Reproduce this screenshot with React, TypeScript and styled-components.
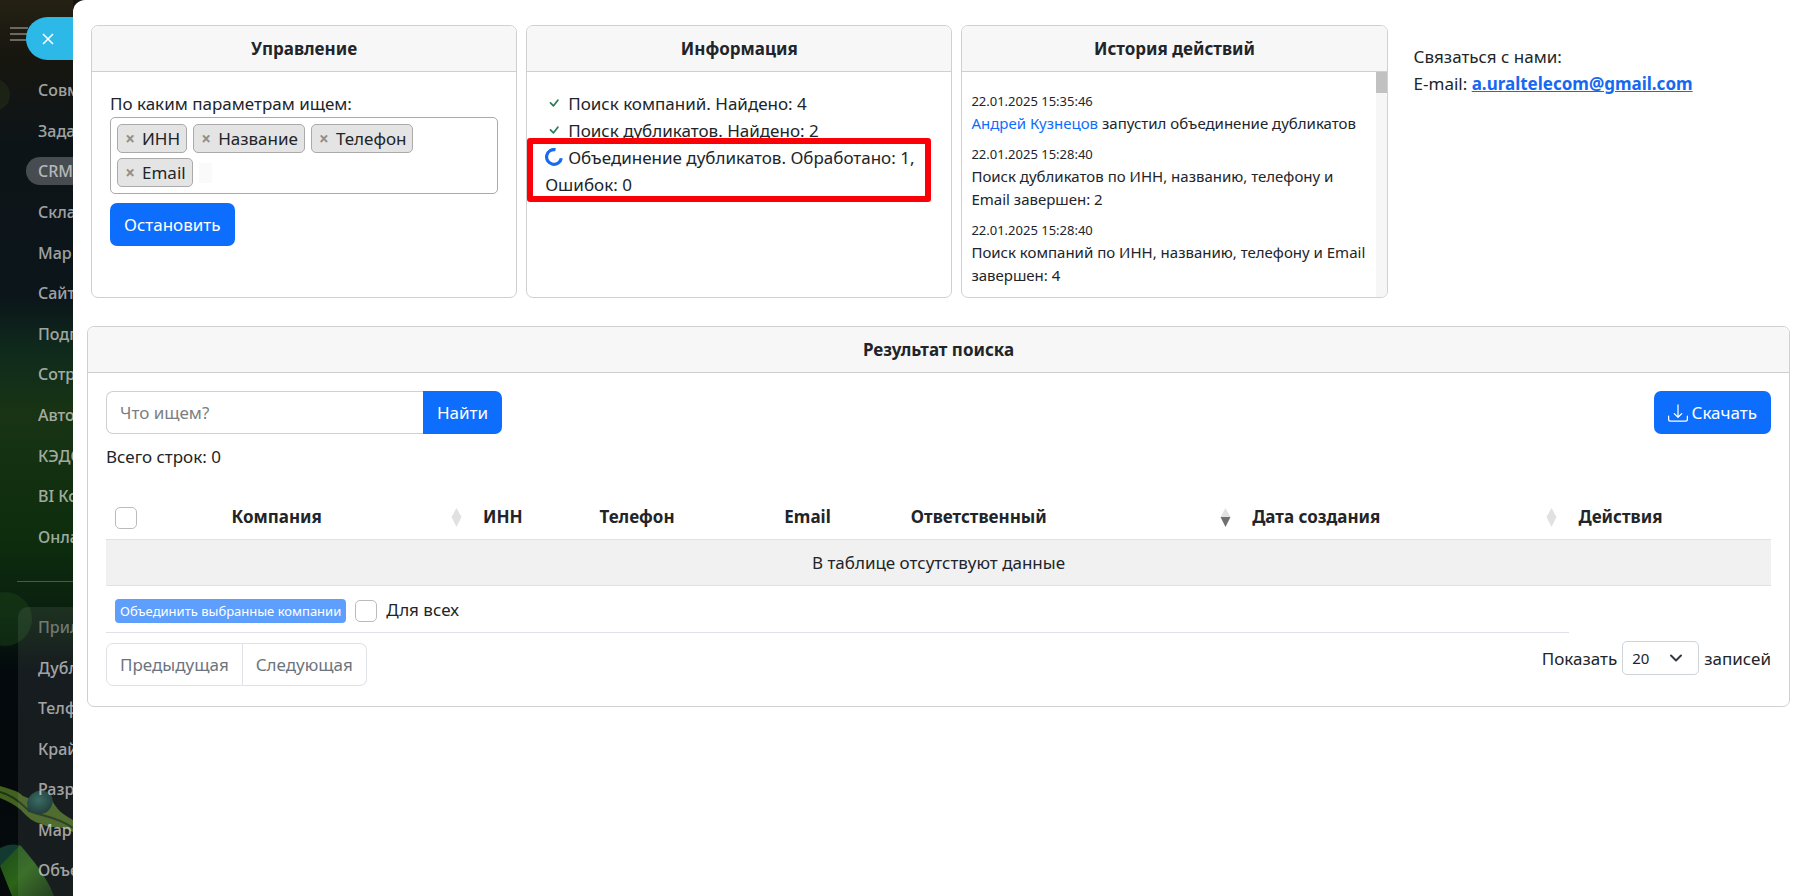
import React from "react";
import styled, { createGlobalStyle } from "styled-components";
import { BsCheck, BsDownload } from "react-icons/bs";

const GlobalStyle = createGlobalStyle`
  *, *::before, *::after { box-sizing: border-box; }
  body {
    margin: 0;
    background: #fff;
    color: #212529;
    font-family: "Noto Sans", "Open Sans", sans-serif;
    font-size: 17px;
    line-height: 27px;
  }
  button, input, select { font: inherit; color: inherit; }
  ul, h2, p { margin: 0; padding: 0; list-style: none; }
`;

const Page = styled.div`
  display: flex;
  min-height: 100vh;
  background: #14140f;
`;

const Sidebar = styled.aside`
  position: relative;
  width: 73px;
  flex: none;
  overflow: hidden;
`;

const Scenery = styled.svg`
  position: absolute;
  inset: 0;
  width: 100%;
  height: 100%;
`;

const SidebarInner = styled.div`
  position: relative;
  display: flex;
  flex-direction: column;
  min-height: 100%;
  padding-top: 17px;
`;

const SidebarTop = styled.div`
  display: flex;
  align-items: center;
  padding-left: 10px;
  height: 43px;
`;

const Burger = styled.button`
  display: flex;
  flex: none;
  width: 18px;
  margin-right: -2px;
  padding: 0 0 9px;
  border: 0;
  background: none;
`;

const ClosePill = styled.button`
  position: relative;
  flex: 1;
  height: 43px;
  padding: 0 0 0 16px;
  border: 0;
  border-radius: 22px 0 0 22px;
  background: #2db9e8;
  color: #fff;
  display: flex;
  align-items: center;
`;

const Nav = styled.nav`
  display: flex;
  flex: 1;
  flex-direction: column;
`;

const Menu = styled.ul`
  display: flex;
  flex-direction: column;
  justify-content: space-between;
  height: 475px;
  margin-top: 16px;
`;

const MenuLink = styled.a<{ $active?: boolean; $dim?: boolean }>`
  display: block;
  height: 28px;
  line-height: 28px;
  margin-left: 26px;
  padding-left: 12px;
  border-radius: 14px 0 0 14px;
  background: ${(p) => (p.$active ? "rgba(255,255,255,.24)" : "none")};
  color: ${(p) => (p.$dim ? "rgba(255,255,255,.38)" : "rgba(255,255,255,.62)")};
  font-size: 16px;
  font-weight: 500;
  text-decoration: none;
  white-space: nowrap;
`;

const Divider = styled.hr`
  width: 56px;
  height: 1px;
  margin: 30px 0 25px 17px;
  border: 0;
  background: rgba(255, 255, 255, 0.25);
`;

const MenuGroup = styled.div`
  flex: 1;
  margin-left: 18px;
  padding-top: 6px;
  border-radius: 10px 0 0 0;
  background: rgba(255, 255, 255, 0.08);
  & ul { height: 271px; margin: 0 0 0 -18px; }
`;

const Panel = styled.main`
  flex: 1;
  min-width: 0;
  padding: 25px 10px 25px 14px;
  border-radius: 12px 0 0 0;
  background: #fff;
`;

const TopRow = styled.div`
  display: grid;
  grid-template-columns: repeat(3, 13fr) 12fr;
  gap: 9px;
  margin: 0 0 28px 4px;
`;

const Card = styled.section`
  display: flex;
  flex-direction: column;
  min-width: 0;
  border: 1px solid #d0d0d0;
  border-radius: 7px;
  overflow: hidden;
  background: #fff;
`;

const TopCard = styled(Card)`
  height: 273px;
`;

const CardTitle = styled.h2`
  flex: none;
  padding: 9px 18px;
  border-bottom: 1px solid #cfcfcf;
  background: #f7f7f7;
  font-size: 17px;
  line-height: 27px;
  font-weight: 700;
  text-align: center;
`;

const CardBody = styled.div`
  padding: 18px;
`;

const FieldLabel = styled.label`
  display: block;
`;

const TagBox = styled.div`
  display: flex;
  flex-wrap: wrap;
  align-items: center;
  gap: 5px 6px;
  padding: 6px 18px 6px 6px;
  margin-bottom: 9px;
  border: 1px solid #aaa;
  border-radius: 5px;
`;

const Tag = styled.span`
  display: flex;
  align-items: center;
  height: 29px;
  padding-right: 6px;
  border: 1px solid #aaa;
  border-radius: 5px;
  background: #e4e4e4;
`;

const TagRemove = styled.button`
  width: 24px;
  padding: 0;
  border: 0;
  background: none;
  color: #8f8f8f;
  font-weight: 700;
  line-height: 27px;
`;

const TagSearch = styled.input`
  width: 13px;
  height: 20px;
  border: 0;
  background: #fafafa;
`;

const Button = styled.button`
  display: inline-flex;
  align-items: center;
  gap: 4px;
  height: 43px;
  padding: 0 14px;
  border: 0;
  border-radius: 7px;
  background: #0d6efd;
  color: #fff;
`;

const Step = styled.li`
  position: relative;
`;

const StepIcon = styled.span`
  display: inline-flex;
  width: 18px;
  height: 18px;
  margin-right: 5px;
  vertical-align: -2px;
  color: #2f7d5b;
`;

const Highlight = styled.div`
  position: absolute;
  z-index: 1;
  top: -6px;
  bottom: -4px;
  left: -18px;
  right: 2px;
  border: 6px solid #fb0007;
  border-radius: 3px;
  pointer-events: none;
`;

const HistoryArea = styled.div`
  display: flex;
  flex: 1;
  min-height: 0;
`;

const HistoryList = styled.ul`
  flex: 1;
  min-width: 0;
  padding: 18px 9px 0;
  overflow: hidden;
  font-size: 15px;
  line-height: 23px;
`;

const HistoryItem = styled.li`
  margin-bottom: 8px;
  & time {
    display: block;
    font-size: 13px;
    line-height: 22px;
  }
  & a { color: #0d6efd; text-decoration: none; }
`;

const ScrollTrack = styled.div`
  width: 11px;
  background: #f6f6f6;
`;

const ScrollThumb = styled.div`
  height: 21px;
  background: #c1c1c1;
`;

const Contact = styled.address`
  padding: 18px 17px;
  font-style: normal;
  & a { color: #1668f0; font-weight: 700; }
`;

const Toolbar = styled.div`
  display: flex;
  justify-content: space-between;
`;

const SearchForm = styled.form`
  display: flex;
  width: 396px;
  & button { border-radius: 0 7px 7px 0; }
`;

const SearchInput = styled.input`
  flex: 1;
  min-width: 0;
  height: 43px;
  padding: 0 13px;
  border: 1px solid #d0d0d0;
  border-right: 0;
  border-radius: 7px 0 0 7px;
  &::placeholder { color: #7a7f84; opacity: 1; }
`;

const RowCount = styled.p`
  margin: 9px 0 24px;
`;

const Table = styled.table`
  width: 100%;
  table-layout: fixed;
  border-collapse: separate;
  border-spacing: 0;
  & th, & td {
    height: 46px;
    padding: 0 9px;
    border-bottom: 1px solid #dee2e6;
    text-align: left;
    white-space: nowrap;
  }
  & tbody td { background: #f1f1f1; text-align: center; }
  & tfoot td { height: 47px; }
  & tfoot td:last-child { border-bottom: 0; }
`;

const HeadCell = styled.div`
  display: flex;
  align-items: center;
  justify-content: space-between;
  padding-right: 3px;
`;

const CheckBox = styled.input`
  appearance: none;
  display: block;
  flex: none;
  width: 22px;
  height: 22px;
  margin: 3px 0 0;
  border: 1px solid #b9bcbf;
  border-radius: 5px;
  background: #fff;
`;

const FootTools = styled.div`
  display: flex;
  align-items: center;
  gap: 9px;
`;

const MergeButton = styled.button`
  height: 24px;
  margin-top: 3px;
  padding: 0 5px;
  border: 0;
  border-radius: 4px;
  background: #5e9ffe;
  color: #fff;
  font-size: 13px;
  line-height: 24px;
`;

const TableFooter = styled.div`
  display: flex;
  justify-content: space-between;
  align-items: flex-start;
  padding-top: 8px;
`;

const Pager = styled.div`
  display: flex;
  margin: 2px 0;
`;

const PageButton = styled.button`
  height: 43px;
  padding: 0 13px;
  border: 1px solid #dee2e6;
  background: #fff;
  color: #6c757d;
  &:first-child { border-radius: 7px 0 0 7px; }
  &:last-child { border-radius: 0 7px 7px 0; border-left: 0; }
`;

const PageSize = styled.label`
  display: flex;
  align-items: center;
  gap: 5px;
`;

const SelectWrap = styled.span`
  position: relative;
  display: flex;
  & svg {
    position: absolute;
    right: 16px;
    top: 10px;
    pointer-events: none;
  }
`;

const Select = styled.select`
  appearance: none;
  width: 77px;
  height: 34px;
  padding: 0 9px;
  border: 1px solid #ced4da;
  border-radius: 5px;
  background: #fff;
  font-size: 15px;
`;

function SortIcon({ desc }: { desc?: boolean }) {
  return (
    <svg width="11" height="20" viewBox="0 0 11 20" aria-hidden="true">
      <path d="M0.5 10 5.5 1 10.5 10z" fill="#e1e1e2" />
      <path d="M0.5 10h10L5.5 20z" fill={desc ? "#6f7072" : "#e1e1e2"} />
    </svg>
  );
}

function Spinner() {
  return (
    <svg width="18" height="18" viewBox="0 0 18 18" aria-hidden="true">
      <path d="M10.5 1.7A7.4 7.4 0 1 0 16.3 10.2" fill="none" stroke="#1a69ee" strokeWidth="3.2" />
    </svg>
  );
}

const mainMenu = ["Совм", "Зада", "CRM", "Скла", "Мар", "Сайт", "Подп", "Сотр", "Авто", "КЭДО", "BI Ко", "Онла"];
const appMenu = ["Прил", "Дубл", "Телф", "Край", "Разр", "Мар", "Объе"];
const tags = ["ИНН", "Название", "Телефон", "Email"];

const columns: { title: string; width: string; sort?: "none" | "desc" }[] = [
  { title: "Компания", width: "15.1%", sort: "none" },
  { title: "ИНН", width: "7%" },
  { title: "Телефон", width: "11.1%" },
  { title: "Email", width: "7.6%" },
  { title: "Ответственный", width: "20.5%", sort: "desc" },
  { title: "Дата создания", width: "19.6%", sort: "none" },
  { title: "Действия", width: "12.1%" },
];

const history = [
  { time: "22.01.2025 15:35:46", who: "Андрей Кузнецов", text: " запустил объединение дубликатов" },
  { time: "22.01.2025 15:28:40", text: "Поиск дубликатов по ИНН, названию, телефону и Email завершен: 2" },
  { time: "22.01.2025 15:28:40", text: "Поиск компаний по ИНН, названию, телефону и Email завершен: 4" },
];

function Backdrop() {
  return (
    <Scenery viewBox="0 0 73 896" preserveAspectRatio="none" aria-hidden="true">
      <defs>
        <linearGradient id="sky" x1="0" y1="0" x2="0" y2="1">
          <stop offset="0" stopColor="#252114" />
          <stop offset=".06" stopColor="#17160f" />
          <stop offset=".16" stopColor="#0d1418" />
          <stop offset=".33" stopColor="#0b151a" />
          <stop offset=".39" stopColor="#0f2a1c" />
          <stop offset=".46" stopColor="#183414" />
          <stop offset=".6" stopColor="#0d2d0d" />
          <stop offset=".68" stopColor="#0a200f" />
          <stop offset=".75" stopColor="#03090c" />
          <stop offset="1" stopColor="#050a0b" />
        </linearGradient>
        <linearGradient id="leaf" x1="0" y1="0" x2="1" y2="1">
          <stop offset="0" stopColor="#1b4a1c" />
          <stop offset=".5" stopColor="#2c6418" />
          <stop offset="1" stopColor="#12300f" />
        </linearGradient>
        <radialGradient id="bud" cx=".45" cy=".4" r=".6">
          <stop offset="0" stopColor="#2a6058" />
          <stop offset="1" stopColor="#102f2c" />
        </radialGradient>
      </defs>
      <rect width="73" height="896" fill="url(#sky)" />
      <circle cx="-6" cy="95" r="16" fill="#1d2217" />
      <circle cx="5" cy="619" r="27" fill="#1d4b1c" opacity=".4" />
      <path d="M0 786c9 3 17 4 23 10l10 4 18-2c4 8 7 14 22 22v12c-14-8-22-2-31-8-8-1-16-8-21-14-6-5-13-9-21-12z" fill="#42601f" />
      <path d="M0 792c12 3 20 10 27 17s26 5 46 19" fill="none" stroke="#1d3415" strokeWidth="2" />
      <path d="M27 803c2-10 12-15 20-11 8 3 7 14 1 19-7 6-14 1-20 1z" fill="url(#bud)" />
      <path d="M0 848c10-5 18-4 22-1l-4 12L0 866z" fill="#123a31" />
      <path d="M0 866l20-21c12 14 26 30 34 51H12z" fill="url(#leaf)" />
    </Scenery>
  );
}

export default function App() {
  return (
    <>
      <GlobalStyle />
      <Page>
        <Sidebar>
          <Backdrop />
          <SidebarInner>
            <SidebarTop>
              <Burger aria-label="Меню">
                <svg width="18" height="14" viewBox="0 0 18 14" stroke="#85837d" strokeWidth="1.5">
                  <path d="M0 1h18M0 7h18M0 13h18" />
                </svg>
              </Burger>
              <ClosePill aria-label="Закрыть">
                <svg width="12" height="12" viewBox="0 0 12 12" stroke="#fff" strokeWidth="1.6">
                  <path d="M1 1l10 10M11 1 1 11" />
                </svg>
              </ClosePill>
            </SidebarTop>
            <Nav>
              <Menu>
                {mainMenu.map((item) => (
                  <li key={item}>
                    <MenuLink href="#" $active={item === "CRM"}>{item}</MenuLink>
                  </li>
                ))}
              </Menu>
              <Divider />
              <MenuGroup>
                <Menu>
                  {appMenu.map((item, i) => (
                    <li key={item}>
                      <MenuLink href="#" $dim={i === 0}>{item}</MenuLink>
                    </li>
                  ))}
                </Menu>
              </MenuGroup>
            </Nav>
          </SidebarInner>
        </Sidebar>

        <Panel>
          <TopRow>
            <TopCard>
              <CardTitle>Управление</CardTitle>
              <CardBody>
                <FieldLabel htmlFor="params">По каким параметрам ищем:</FieldLabel>
                <TagBox>
                  {tags.map((tag) => (
                    <Tag key={tag}>
                      <TagRemove aria-label={`Удалить ${tag}`}>×</TagRemove>
                      {tag}
                    </Tag>
                  ))}
                  <TagSearch id="params" type="text" />
                </TagBox>
                <Button>Остановить</Button>
              </CardBody>
            </TopCard>

            <TopCard>
              <CardTitle>Информация</CardTitle>
              <CardBody>
                <ul>
                  <Step><StepIcon><BsCheck size={18} /></StepIcon>Поиск компаний. Найдено: 4</Step>
                  <Step><StepIcon><BsCheck size={18} /></StepIcon>Поиск дубликатов. Найдено: 2</Step>
                  <Step>
                    <StepIcon><Spinner /></StepIcon>Объединение дубликатов. Обработано: 1, Ошибок: 0
                    <Highlight />
                  </Step>
                </ul>
              </CardBody>
            </TopCard>

            <TopCard>
              <CardTitle>История действий</CardTitle>
              <HistoryArea>
                <HistoryList>
                  {history.map((h, i) => (
                    <HistoryItem key={i}>
                      <time>{h.time}</time>
                      {h.who && <a href="#">{h.who}</a>}
                      {h.text}
                    </HistoryItem>
                  ))}
                </HistoryList>
                <ScrollTrack><ScrollThumb /></ScrollTrack>
              </HistoryArea>
            </TopCard>

            <Contact>
              Связаться с нами:<br />
              E-mail: <a href="mailto:a.uraltelecom@gmail.com">a.uraltelecom@gmail.com</a>
            </Contact>
          </TopRow>

          <Card>
            <CardTitle>Результат поиска</CardTitle>
            <CardBody>
              <Toolbar>
                <SearchForm onSubmit={(e) => e.preventDefault()}>
                  <SearchInput type="text" placeholder="Что ищем?" aria-label="Что ищем?" />
                  <Button type="submit">Найти</Button>
                </SearchForm>
                <Button><BsDownload size={20} />Скачать</Button>
              </Toolbar>
              <RowCount>Всего строк: 0</RowCount>
              <Table>
                <colgroup>
                  <col width="7%" />
                  {columns.map((c) => <col key={c.title} width={c.width} />)}
                </colgroup>
                <thead>
                  <tr>
                    <th><CheckBox type="checkbox" aria-label="Выбрать все" /></th>
                    {columns.map((c) => (
                      <th key={c.title} scope="col">
                        <HeadCell>
                          {c.title}
                          {c.sort && <SortIcon desc={c.sort === "desc"} />}
                        </HeadCell>
                      </th>
                    ))}
                  </tr>
                </thead>
                <tbody>
                  <tr><td colSpan={8}>В таблице отсутствуют данные</td></tr>
                </tbody>
                <tfoot>
                  <tr>
                    <td colSpan={7}>
                      <FootTools>
                        <MergeButton>Объединить выбранные компании</MergeButton>
                        <CheckBox type="checkbox" id="for-all" />
                        <label htmlFor="for-all">Для всех</label>
                      </FootTools>
                    </td>
                    <td />
                  </tr>
                </tfoot>
              </Table>
              <TableFooter>
                <Pager>
                  <PageButton>Предыдущая</PageButton>
                  <PageButton>Следующая</PageButton>
                </Pager>
                <PageSize>
                  Показать
                  <SelectWrap>
                    <Select defaultValue="20">
                      <option>20</option>
                    </Select>
                    <svg width="14" height="14" viewBox="0 0 14 14" fill="none" stroke="#343a40" strokeWidth="2" strokeLinecap="round" strokeLinejoin="round">
                      <path d="M2 4.5l5 5 5-5" />
                    </svg>
                  </SelectWrap>
                  записей
                </PageSize>
              </TableFooter>
            </CardBody>
          </Card>
        </Panel>
      </Page>
    </>
  );
}
